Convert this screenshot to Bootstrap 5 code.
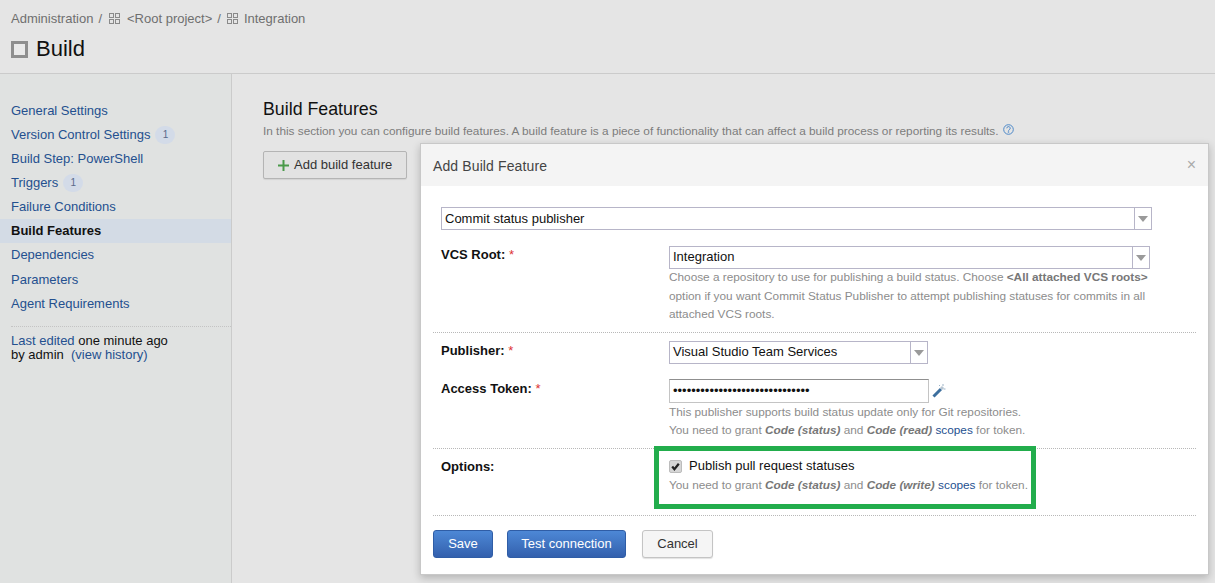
<!DOCTYPE html>
<html lang="en">
<head>
<meta charset="utf-8">
<title>Build</title>
<link href="https://cdn.jsdelivr.net/npm/bootstrap@5.3.0/dist/css/bootstrap.min.css" rel="stylesheet">
<style>
html,body{height:100%;overflow:hidden}
body{font:13px/18.6px "Liberation Sans",Arial,sans-serif;background:#e5e5e5;color:#111;position:relative;width:1215px;height:583px}
a{color:#24508f;text-decoration:none}
.top-head{height:74px;border-bottom:1px solid #cbcbcb;padding:9px 11px 0}
.crumbs{color:#6f6f6f;font-size:13px;line-height:19px;gap:5px}
.crumbs svg{margin-left:1px;margin-right:1px}
.crumbs svg.first-ico{margin-left:2px;margin-right:2px}
.page-title{font-size:22px;line-height:24px;font-weight:400;margin:9px 0 0;gap:8px;color:#111}
.bld-ico{width:17px;height:17px;border:3px solid #8e8e8e;background:#e9e9e9;display:block}
.body-row{height:509px}
.side{width:232px;background:#e0e2e1;border-right:1px solid #cbcbcb;padding-top:24.6px;font-size:13px}
.side-item{height:24.15px;line-height:24.15px;padding-left:11px;gap:5px}
.side-item.active{background:#d3dbe5;font-weight:700;color:#111}
.count{font-size:10px;line-height:18px;width:20px;height:18px;border-radius:9px;background:#d3dbe8;color:#5a6a8a;text-align:center}
.side-note{margin:10px 0 0 11px;border-top:1px dotted #c4c4c4;padding-top:7px;font-size:13px;line-height:14.5px;color:#111}
.main-col{padding:24px 0 0 31px}
.sec-title{font-size:17.8px;line-height:22px;font-weight:400;margin:0;color:#111}
.sec-desc{color:#7c7c7c;font-size:11.8px;line-height:16px;margin:3px 0 0;gap:4px}
.add-btn{margin-top:12px;font-size:13px;line-height:18px;padding:4px 14px;background:#e2e2e2;border:1px solid #b4b4b4;border-radius:2px;color:#333;gap:5px;box-shadow:0 1px 1px rgba(0,0,0,.08)}
.dlg{position:absolute;left:420px;top:143px;width:789px;height:432px;background:#fff;border:1px solid #c8c8c8;box-shadow:0 3px 8px rgba(0,0,0,.22)}
.dlg-head{height:42px;background:#f4f4f4;padding:2px 12px 0;color:#444;font-size:14px;letter-spacing:.12px}
.dlg-x{color:#aaa;font-size:16px;letter-spacing:0;margin-right:0;margin-top:-2px}
.dlg-body{padding:0 12px}
.fake-sel{border:1px solid #b7b5c8;height:23px;line-height:20px;padding:0 3px;font-size:13px;color:#111;background:#fff}
.sel-txt{flex:1;font-size:13px}
.sel-btn{width:17px;height:21px;border-left:1px solid #b7b5c8;margin-right:-3px;flex:none}
.sel-btn i{display:block;width:0;border:5px solid transparent;border-top:6px solid #9a9a9a;border-bottom:0;margin:8px auto 0}
.top-sel{margin:21px 44px 0 8px;line-height:22px}
.frow{padding:0 8px}
.flabel{width:228px;flex:none;font-weight:700;color:#111;font-size:13px}
.star{color:#d33;font-weight:400}
.hint{color:#8c8c8c;font-size:11.8px;line-height:18.6px}
.hint b,.hint em{color:#777}
.hint a{color:#24508f}
.dots{border-top:1px dotted #b8b8b8;margin:0}
.pw{width:260px;height:24px;border:1px solid #c4c4c4;border-top-color:#8f8f8f;padding:0 3px;font-size:13px;line-height:21px;color:#111;background:#fff}
.wand{margin-left:3px}
.form-check-input.chk,.form-check-input.chk:checked[type=checkbox]{width:13px;height:13px;margin:0 7px 0 0;background-color:#d6d6d6;border:1px solid #bcbcbc;border-radius:2px;--bs-form-check-bg-image:url("data:image/svg+xml,%3csvg xmlns='http://www.w3.org/2000/svg' viewBox='0 0 20 20'%3e%3cpath fill='none' stroke='%23222' stroke-width='4' d='M4 10l4 5 8-10'/%3e%3c/svg%3e");background-size:100%;flex:none;box-shadow:none;opacity:1}
.green-box{position:absolute;left:-15px;top:-11px;width:382px;height:63px;border:5px solid #22ad4c;pointer-events:none}
.cell{position:relative;flex:1}
.act{padding-top:14px;gap:14px}
.act .btn{font-size:13px;line-height:18px;height:28px;border-radius:3px}
.act .btn-save{width:60px;padding:4px 0}
.act .btn-test{width:119px;padding:4px 0}
.act .btn-plain{width:71px;padding:4px 0}
.btn-blue{background:linear-gradient(#4d88d6,#3360ad);border:1px solid #2f5da6;color:#fff}
.btn-blue:hover{color:#fff}
.btn-plain{background:#f5f5f5;border:1px solid #c4c4c4;color:#333;margin-left:2px;box-shadow:0 1px 1px rgba(0,0,0,.12)}
</style>
</head>
<body>
<header class="top-head">
  <div class="crumbs d-flex align-items-center">
    <span>Administration</span><span>/</span>
    <svg class="first-ico" width="11" height="11" viewBox="0 0 11 11" fill="none" stroke="#8a8a8a"><rect x=".5" y=".5" width="4" height="4"/><rect x="6.5" y=".5" width="4" height="4"/><rect x=".5" y="6.5" width="4" height="4"/><rect x="6.5" y="6.5" width="4" height="4"/></svg>
    <span>&lt;Root project&gt;</span><span>/</span>
    <svg width="11" height="11" viewBox="0 0 11 11" fill="none" stroke="#8a8a8a"><rect x=".5" y=".5" width="4" height="4"/><rect x="6.5" y=".5" width="4" height="4"/><rect x=".5" y="6.5" width="4" height="4"/><rect x="6.5" y="6.5" width="4" height="4"/></svg>
    <span>Integration</span>
  </div>
  <h1 class="page-title d-flex align-items-center"><span class="bld-ico"></span><span>Build</span></h1>
</header>
<div class="body-row d-flex">
  <nav class="side flex-shrink-0">
    <div class="side-item d-flex align-items-center"><a href="#">General Settings</a></div>
    <div class="side-item d-flex align-items-center"><a href="#">Version Control Settings</a><span class="count">1</span></div>
    <div class="side-item d-flex align-items-center"><a href="#">Build Step: PowerShell</a></div>
    <div class="side-item d-flex align-items-center"><a href="#">Triggers</a><span class="count">1</span></div>
    <div class="side-item d-flex align-items-center"><a href="#">Failure Conditions</a></div>
    <div class="side-item active d-flex align-items-center">Build Features</div>
    <div class="side-item d-flex align-items-center"><a href="#">Dependencies</a></div>
    <div class="side-item d-flex align-items-center"><a href="#">Parameters</a></div>
    <div class="side-item d-flex align-items-center"><a href="#">Agent Requirements</a></div>
    <div class="side-note"><a href="#">Last edited</a> one minute ago<br>by admin &nbsp;<a href="#">(view history)</a></div>
  </nav>
  <main class="main-col flex-grow-1">
    <h2 class="sec-title">Build Features</h2>
    <p class="sec-desc d-flex align-items-center"><span>In this section you can configure build features. A build feature is a piece of functionality that can affect a build process or reporting its results.</span>
      <svg class="mb-1" width="11" height="11" viewBox="0 0 11 11"><circle cx="5.5" cy="5.5" r="4.8" fill="none" stroke="#4d88c8"/><circle cx="5.5" cy="8" r=".8" fill="#4d88c8"/><path d="M3.8 4.3a1.7 1.7 0 1 1 2.5 1.5c-.6.3-.8.5-.8 1" fill="none" stroke="#4d88c8"/></svg></p>
    <button type="button" class="btn add-btn d-inline-flex align-items-center">
      <svg width="11" height="11" viewBox="0 0 11 11"><path d="M5.5 0v11M0 5.5h11" stroke="#4a9a4a" stroke-width="2"/></svg><span>Add build feature</span></button>
  </main>
</div>

<section class="dlg">
  <div class="dlg-head d-flex align-items-center justify-content-between"><span>Add Build Feature</span><span class="dlg-x">×</span></div>
  <div class="dlg-body">
    <div class="fake-sel top-sel d-flex"><span class="sel-txt">Commit status publisher</span><span class="sel-btn"><i></i></span></div>
    <div class="frow d-flex" style="padding-top:16px;padding-bottom:8px">
      <div class="flabel">VCS Root: <span class="star">*</span></div>
      <div class="cell">
        <div class="fake-sel d-flex" style="width:481px"><span class="sel-txt">Integration</span><span class="sel-btn"><i></i></span></div>
        <div class="hint" style="margin-top:-1px">Choose a repository to use for publishing a build status. Choose <b>&lt;All attached VCS roots&gt;</b><br>option if you want Commit Status Publisher to attempt publishing statuses for commits in all<br>attached VCS roots.</div>
      </div>
    </div>
    <div class="dots"></div>
    <div class="frow d-flex" style="padding-top:8px">
      <div class="flabel" style="margin-top:1px">Publisher: <span class="star">*</span></div>
      <div class="cell"><div class="fake-sel d-flex" style="width:259px"><span class="sel-txt">Visual Studio Team Services</span><span class="sel-btn"><i></i></span></div></div>
    </div>
    <div class="frow d-flex" style="padding-top:15px;padding-bottom:8px">
      <div class="flabel" style="margin-top:1px">Access Token: <span class="star">*</span></div>
      <div class="cell">
        <div class="d-flex align-items-center"><div class="pw">••••••••••••••••••••••••••••••</div>
          <svg class="wand" width="14" height="14" viewBox="0 0 14 14"><path d="M1.5 12.5L9 5" stroke="#3d6f9e" stroke-width="3"/><path d="M9 5l2-2" stroke="#b9c6d2" stroke-width="3"/><path d="M11 0v2M13.5 5h-2M7 1l1 1" stroke="#9db4c8"/></svg></div>
        <div class="hint">This publisher supports build status update only for Git repositories.<br>You need to grant <em><b>Code (status)</b></em> and <em><b>Code (read)</b></em> <a href="#">scopes</a> for token.</div>
      </div>
    </div>
    <div class="dots"></div>
    <div class="frow d-flex" style="padding-top:8px;padding-bottom:21px">
      <div class="flabel" style="margin-top:1px">Options:</div>
      <div class="cell">
        <div class="d-flex align-items-center"><input class="form-check-input chk" type="checkbox" checked aria-label="Publish pull request statuses"><span>Publish pull request statuses</span></div>
        <div class="hint">You need to grant <em><b>Code (status)</b></em> and <em><b>Code (write)</b></em> <a href="#">scopes</a> for token.</div>
        <div class="green-box"></div>
      </div>
    </div>
    <div class="dots"></div>
    <div class="act d-flex">
      <button type="button" class="btn btn-blue btn-save">Save</button>
      <button type="button" class="btn btn-blue btn-test">Test connection</button>
      <button type="button" class="btn btn-plain">Cancel</button>
    </div>
  </div>
</section>
</body>
</html>
